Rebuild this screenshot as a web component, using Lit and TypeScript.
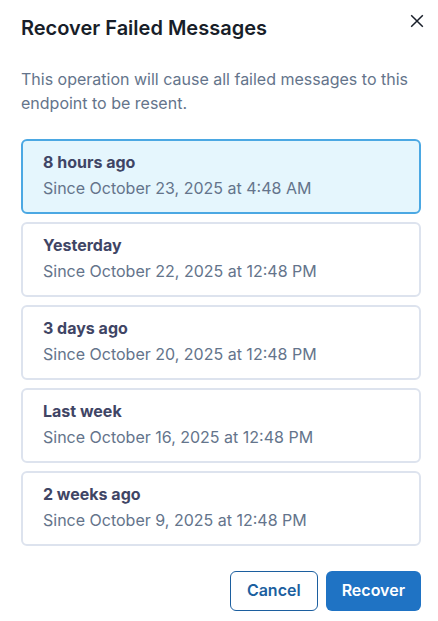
import { LitElement, html, css } from "lit";
import { customElement, state } from "lit/decorators.js";

interface RecoverOption {
  id: string;
  label: string;
  since: string;
}

const OPTIONS: RecoverOption[] = [
  { id: "8h", label: "8 hours ago", since: "October 23, 2025 at 4:48 AM" },
  { id: "1d", label: "Yesterday", since: "October 22, 2025 at 12:48 PM" },
  { id: "3d", label: "3 days ago", since: "October 20, 2025 at 12:48 PM" },
  { id: "1w", label: "Last week", since: "October 16, 2025 at 12:48 PM" },
  { id: "2w", label: "2 weeks ago", since: "October 9, 2025 at 12:48 PM" },
];

@customElement("app-root")
export class AppRoot extends LitElement {
  static styles = css`
    :host {
      display: block;
      font-family: Inter, "Liberation Sans", sans-serif;
      font-size: 16px;
      line-height: 24px;
      color: #64748b;
      background: #fff;
    }
    * {
      box-sizing: border-box;
    }
    .dialog {
      padding: 12px 17px 10px 21px;
    }
    .header {
      display: flex;
      justify-content: space-between;
      align-items: flex-start;
    }
    .title {
      margin: 0;
      font-size: 20px;
      line-height: 32px;
      font-weight: 600;
      color: #181e29;
    }
    .close {
      display: flex;
      margin: 0 -5px 0 0;
      padding: 1px;
      border: 0;
      background: none;
      color: #181e29;
      cursor: pointer;
    }
    .intro {
      margin: 23px 0 24px;
    }
    .options {
      display: grid;
      gap: 8px;
      margin: 0;
      padding: 0;
      border: 0;
    }
    .option {
      display: block;
      padding: 9px 20px 10px;
      border: 2px solid #dde3ee;
      border-radius: 6px;
      cursor: pointer;
    }
    .option.selected {
      border-color: #4ba8e3;
      background: #e5f6fd;
    }
    .option:focus-within:has(:focus-visible) {
      outline: 2px solid #1f73c4;
      outline-offset: 1px;
    }
    .radio {
      position: absolute;
      appearance: none;
      margin: 0;
      opacity: 0;
    }
    .label,
    .since {
      display: block;
    }
    .label {
      font-weight: 650;
      color: #3f4565;
    }
    .since {
      line-height: 28px;
    }
    .footer {
      display: flex;
      justify-content: flex-end;
      gap: 8px;
      margin-top: 25px;
    }
    .button {
      padding: 6px 16px 8px;
      border: 1px solid #1c5f9f;
      border-radius: 6px;
      background: #fff;
      color: #1c5f9f;
      font: inherit;
      font-weight: 600;
      cursor: pointer;
    }
    .button.primary {
      padding: 7px 16px 9px;
      border: 0;
      background: #1f73c4;
      color: #fff;
    }
  `;

  @state() private selected = "8h";

  render() {
    return html`
      <section class="dialog" role="dialog" aria-labelledby="title">
        <header class="header">
          <h1 class="title" id="title">Recover Failed Messages</h1>
          <button class="close" type="button" aria-label="Close">
            <svg width="16" height="16" viewBox="0 0 16 16" fill="none" stroke="currentColor" stroke-width="1.5">
              <path d="M2.2 2.2 13.8 13.8M13.8 2.2 2.2 13.8" />
            </svg>
          </button>
        </header>
        <p class="intro">This operation will cause all failed messages to this endpoint to be resent.</p>
        <fieldset class="options" aria-label="Recover since">
          ${OPTIONS.map(
            (o) => html`
              <label class="option ${o.id === this.selected ? "selected" : ""}">
                <input
                  class="radio"
                  type="radio"
                  name="since"
                  .value=${o.id}
                  .checked=${o.id === this.selected}
                  @change=${() => (this.selected = o.id)}
                />
                <span class="label">${o.label}</span>
                <span class="since">Since ${o.since}</span>
              </label>
            `,
          )}
        </fieldset>
        <footer class="footer">
          <button class="button" type="button">Cancel</button>
          <button class="button primary" type="button">Recover</button>
        </footer>
      </section>
    `;
  }
}
